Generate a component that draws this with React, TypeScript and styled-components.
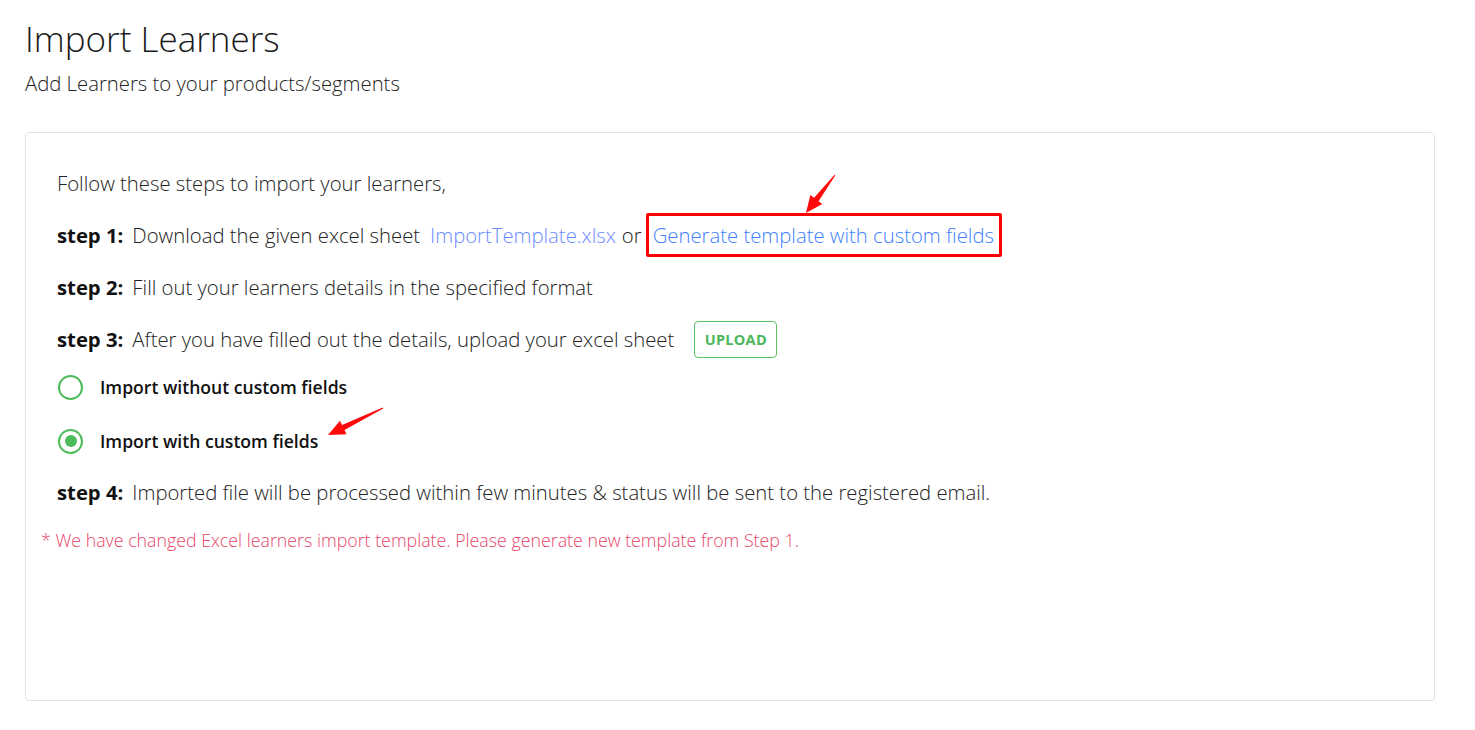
import styled, { createGlobalStyle } from "styled-components";

const GlobalStyle = createGlobalStyle`
	body {
		margin: 0;
		background: #ffffff;
		font-family: "Open Sans", "Liberation Sans", sans-serif;
		color: #222222;
	}
`;

const Page = styled.div`
	padding: 14px 40px 28px 25px;
	box-sizing: border-box;
	width: 1475px;
`;

const Title = styled.h1`
	margin: 0;
	font-size: 35px;
	font-weight: 300;
	line-height: 50px;
	color: #1a1a1a;
`;

const Subtitle = styled.p`
	margin: 4px 0 0;
	font-size: 20.3px;
	font-weight: 300;
	line-height: 30px;
	color: #222222;
`;

const Card = styled.section`
	position: relative;
	margin-top: 34px;
	height: 569px;
	box-sizing: border-box;
	border: 1px solid #e3e3e3;
	border-radius: 4px;
	padding: 24px 15px 0;
`;

const Steps = styled.div`
	padding-left: 16px;
	display: flex;
	flex-direction: column;
`;

const Line = styled.div<{ $h?: number }>`
	display: flex;
	align-items: center;
	height: ${(p) => p.$h ?? 52}px;
	font-size: 20.3px;
	font-weight: 300;
	color: #222222;
	white-space: nowrap;
`;

const Label = styled.b`
	font-weight: 700;
	margin-right: 9px;
	color: #111111;
`;

const Link = styled.a<{ $tone?: string }>`
	color: ${(p) => p.$tone ?? "#3f7fff"};
	text-decoration: none;
	margin: 0 6px 0 10px;
	cursor: pointer;
`;

const Highlight = styled.span`
	position: relative;
	display: inline-flex;
	align-items: center;
	height: 44px;
	box-sizing: border-box;
	padding: 0 5px 0 4px;
	margin-left: 4px;
	border: 3px solid #ff0000;
	border-radius: 2px;
	color: #3f7fff;
`;

const UploadButton = styled.button`
	margin-left: 20px;
	height: 37px;
	width: 83px;
	padding: 0;
	border: 1px solid #5cc166;
	border-radius: 4px;
	background: #ffffff;
	color: #4cb65a;
	font-family: "Open Sans", "Liberation Sans", sans-serif;
	font-size: 14.5px;
	font-weight: 700;
	letter-spacing: 0.3px;
	cursor: pointer;
`;

const RadioRow = styled.label<{ $offset?: number }>`
	position: relative;
	display: flex;
	align-items: center;
	height: 54px;
	margin-top: ${(p) => p.$offset ?? 0}px;
	font-size: 17.6px;
	font-weight: 600;
	color: #111111;
	cursor: pointer;
`;

const RadioCircle = styled.span<{ $checked?: boolean }>`
	width: 25px;
	height: 25px;
	box-sizing: border-box;
	border: 2.5px solid #4cbb5a;
	border-radius: 50%;
	margin: 0 17px 0 1px;
	display: flex;
	align-items: center;
	justify-content: center;

	&::after {
		content: "";
		width: 12px;
		height: 12px;
		border-radius: 50%;
		background: #4cbb5a;
		display: ${(p) => (p.$checked ? "block" : "none")};
	}
`;

const Note = styled.p`
	margin: 13px 0 0;
	font-size: 17.8px;
	line-height: 22px;
	font-weight: 300;
	color: #e8466a;
`;

const Arrow = styled.svg`
	position: absolute;
	pointer-events: none;
	overflow: visible;
`;

function RedArrow({
	left,
	top,
	x1,
	y1,
	x2,
	y2,
}: {
	left: number;
	top: number;
	x1: number;
	y1: number;
	x2: number;
	y2: number;
}) {
	const ang = Math.atan2(y2 - y1, x2 - x1);
	const head = 17;
	const hw = 7.5;
	const bx = x2 - Math.cos(ang) * head;
	const by = y2 - Math.sin(ang) * head;
	const nx = -Math.sin(ang);
	const ny = Math.cos(ang);
	const pts = [
		[x1 + nx * 0.5, y1 + ny * 0.5],
		[bx + nx * 2.8, by + ny * 2.8],
		[bx + nx * hw, by + ny * hw],
		[x2, y2],
		[bx - nx * hw, by - ny * hw],
		[bx - nx * 2.8, by - ny * 2.8],
		[x1 - nx * 0.5, y1 - ny * 0.5],
	]
		.map((p) => p.join(","))
		.join(" ");
	return (
		<Arrow
			width={Math.max(x1, x2) + 10}
			height={Math.max(y1, y2) + 10}
			style={{ left, top }}
		>
			<polygon points={pts} fill="#ff0a0a" />
		</Arrow>
	);
}

export default function App() {
	return (
		<>
			<GlobalStyle />
			<Page>
				<Title>Import Learners</Title>
				<Subtitle>Add Learners to your products/segments</Subtitle>
				<Card>
					<Steps>
						<Line>Follow these steps to import your learners,</Line>
						<Line>
							<Label>step 1:</Label>
							Download the given excel sheet
							<Link $tone="#6a8cff">ImportTemplate.xlsx</Link>
							or
							<Highlight>Generate template with custom fields</Highlight>
						</Line>
						<Line>
							<Label>step 2:</Label>
							Fill out your learners details in the specified format
						</Line>
						<Line>
							<Label>step 3:</Label>
							After you have filled out the details, upload your excel sheet
							<UploadButton>UPLOAD</UploadButton>
						</Line>
						<RadioRow $offset={-5}>
							<RadioCircle />
							Import without custom fields
						</RadioRow>
						<RadioRow>
							<RadioCircle $checked />
							Import with custom fields
						</RadioRow>
						<Line $h={48}>
							<Label>step 4:</Label>
							Imported file will be processed within few minutes &amp; status
							will be sent to the registered email.
						</Line>
					</Steps>
					<Note>
						* We have changed Excel learners import template. Please generate
						new template from Step 1.
					</Note>
					<RedArrow left={780} top={42} x1={29} y1={0} x2={0} y2={38} />
					<RedArrow left={302} top={275} x1={55} y1={0} x2={0} y2={27} />
				</Card>
			</Page>
		</>
	);
}
